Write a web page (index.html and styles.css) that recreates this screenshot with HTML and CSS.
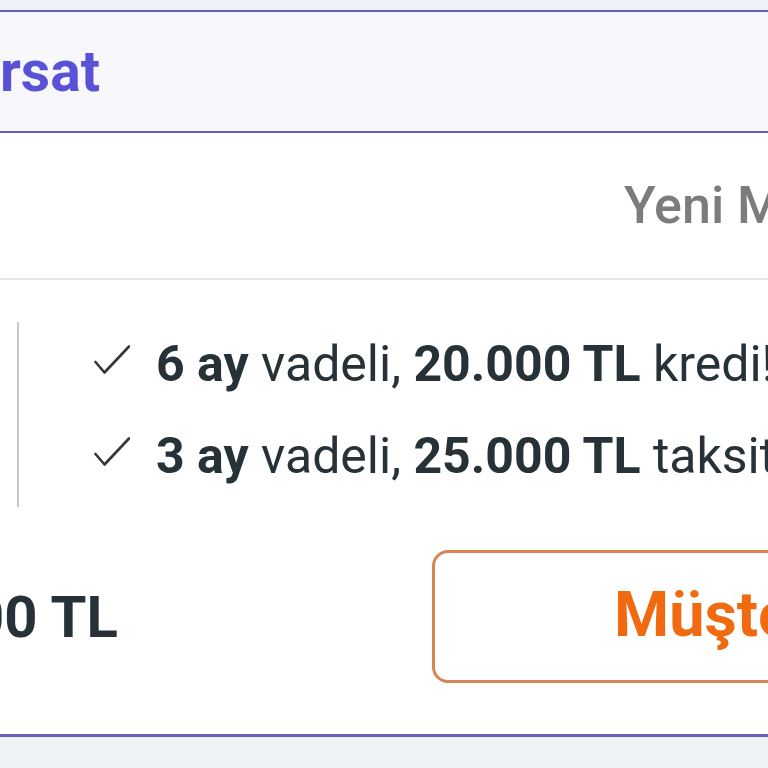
FILE: index.html
```
<!DOCTYPE html>
<html lang="tr">
<head>
<meta charset="utf-8">
<title>Fırsat</title>
<link rel="stylesheet" href="styles.css">
</head>
<body>
<div class="top-strip"></div>
<section class="card">
  <header class="card-header">rsat</header>
  <div class="card-sub"><span class="sub-label">Yeni M</span></div>
  <div class="features">
    <div class="bar"></div>
    <ul class="list">
      <li class="item"><svg class="check" viewBox="0 0 36 30" width="36" height="30"><polyline points="1.5,18 10.5,28.5 35,2.5" /></svg><b>6 ay</b> vadeli, <b>20.000 TL</b> kredi!</li>
      <li class="item"><svg class="check" viewBox="0 0 36 30" width="36" height="30"><polyline points="1.5,18 10.5,28.5 35,2.5" /></svg><b>3 ay</b> vadeli, <b>25.000 TL</b> taksit</li>
    </ul>
  </div>
  <div class="footer">
    <div class="price">00 TL</div>
    <button class="cta">Müşteri</button>
  </div>
</section>
<div class="bottom-strip"></div>
</body>
</html>
```
FILE: styles.css
```
html, body {
  margin: 0;
  padding: 0;
}
body {
  width: 768px;
  height: 768px;
  overflow: hidden;
  background: #eef2f5;
  font-family: Roboto, "Noto Sans", Arial, sans-serif;
}
.top-strip {
  height: 10px;
  background: #eef1f8;
}
.card {
  background: #ffffff;
  border-top: 2px solid #6660c2;
  border-bottom: 3px solid #6a61b6;
}
.card-header {
  height: 119px;
  line-height: 119px;
  background: #f7f7fc;
  border-bottom: 2px solid #6660c2;
  color: #5a52d6;
  font-size: 57px;
  font-weight: 700;
  padding-left: 0;
  white-space: nowrap;
}
.card-sub {
  height: 145px;
  line-height: 145px;
  border-bottom: 2px solid #e6e6e6;
  padding-left: 624px;
  white-space: nowrap;
  overflow: hidden;
}
.sub-label {
  color: #7a7c7d;
  font-size: 52px;
  font-weight: 500;
}
.features {
  display: flex;
  align-items: flex-start;
  padding: 38px 0 0 17px;
}
.bar {
  width: 2px;
  height: 185px;
  margin-top: 4px;
  background: #c9c9c9;
  flex: none;
}
.list {
  list-style: none;
  margin: 0 0 0 75px;
  padding: 0;
  white-space: nowrap;
}
.item {
  height: 92px;
  line-height: 92px;
  font-size: 50px;
  color: #263238;
  font-weight: 400;
}
.item b {
  font-weight: 700;
}
.check {
  vertical-align: 7px;
  margin-right: 26px;
  fill: none;
  stroke: #33373a;
  stroke-width: 2.6;
  stroke-linecap: round;
  stroke-linejoin: round;
}
.footer {
  display: grid;
  grid-template-columns: 432px 520px;
  align-items: center;
  padding: 43px 0 51px 0;
}
.price {
  margin-left: -29px;
  font-size: 58px;
  font-weight: 700;
  color: #263238;
  white-space: nowrap;
}
.cta {
  height: 133px;
  box-sizing: border-box;
  border: 3px solid #d68650;
  border-radius: 16px;
  background: #ffffff;
  color: #f26a0f;
  font-family: Roboto, "Noto Sans", Arial, sans-serif;
  font-size: 63px;
  font-weight: 700;
  text-align: left;
  padding: 0 0 4px 179px;
  white-space: nowrap;
}
.bottom-strip {
  height: 40px;
  background: #eef2f5;
}
```
